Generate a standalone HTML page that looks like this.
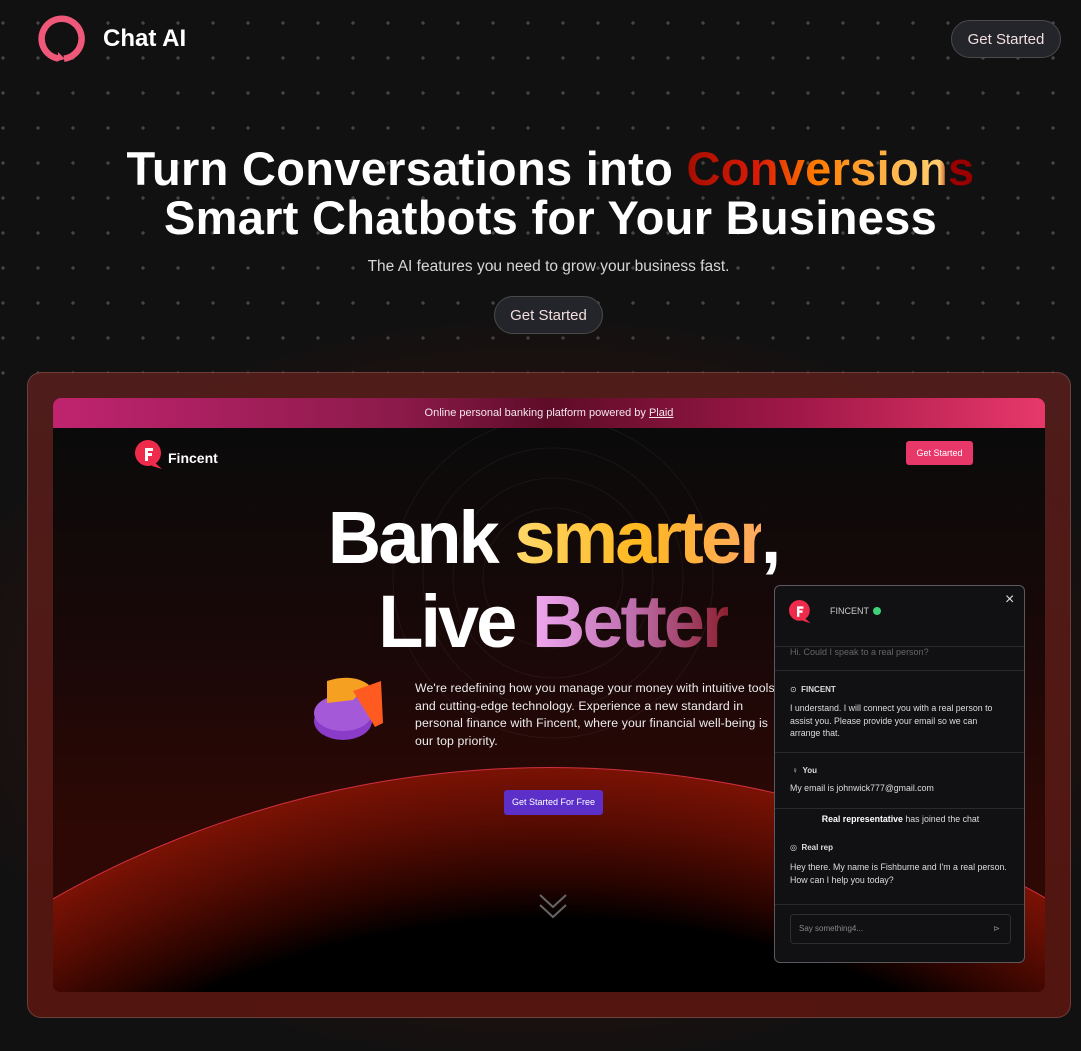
<!DOCTYPE html>
<html><head><meta charset="utf-8"><style>
*{margin:0;padding:0;box-sizing:border-box}
html,body{width:1081px;height:1051px;overflow:hidden}
body{background:#111111;font-family:"Liberation Sans",sans-serif;color:#fff;position:relative}
.abs{position:absolute}
.dots{left:0;top:0;width:1081px;height:380px}
.glow{left:0;top:300px;width:1081px;height:751px;background:radial-gradient(ellipse 620px 380px at 50% 52%,rgba(110,25,15,.75),rgba(60,15,10,.4) 70%,rgba(17,17,17,0) 100%)}
.btn{border:1px solid #4a4a4a;background:#24252a;border-radius:20px;color:#f2dede;font-size:15px;display:flex;align-items:center;justify-content:center}
h1{position:absolute;left:10px;width:1081px;text-align:center;font-size:47px;font-weight:bold;line-height:48px;letter-spacing:0.3px}
.grad{background:linear-gradient(90deg,#a50e00 0%,#d91a07 25%,#ff7a00 45%,#ffb347 70%,#ffcf70 88%,#9a0000 92%,#9a0000 100%);-webkit-background-clip:text;background-clip:text;color:transparent}
.frame{left:27px;top:372px;width:1044px;height:646px;border-radius:14px;border:1px solid rgba(255,255,255,.17);background:linear-gradient(180deg,rgba(85,30,28,.9),rgba(90,22,15,.9));}
.inner{left:53px;top:398px;width:992px;height:594px;border-radius:8px;overflow:hidden;background:#0a0a0a}
.banner{left:0;top:0;width:992px;height:30px;background:linear-gradient(90deg,#c0246f,#8c1a4a 35%,#5e0c28 50%,#a01848 75%,#e8386a);font-size:11px;color:#f5e6ee;text-align:center;line-height:30px}
.chat{left:774px;top:585px;width:251px;height:378px;background:#111113;border:1px solid #5a5a5e;border-radius:6px;overflow:hidden;font-size:8.5px;color:#ddd}
.sep{position:absolute;left:0;width:251px;height:1px;background:#2a2a2d}
</style></head><body>
<svg class="abs dots" width="1081" height="380"><defs><pattern id="p" x="21" y="76" width="35" height="35" patternUnits="userSpaceOnUse"><path d="M17 15v4M15 17h4" stroke="#555" stroke-width="1"/></pattern></defs><rect width="1081" height="380" fill="url(#p)"/></svg>
<div class="abs glow"></div>
<svg class="abs" style="left:38px;top:15px" width="48" height="48" viewBox="0 0 48 48"><path d="M20.5 43.5 A20 20 0 1 1 26 43.6" fill="none" stroke="#f0587a" stroke-width="6.5"/><path d="M20 37 L20 46 L27 44Z" fill="#f0587a"/></svg>
<div class="abs" style="left:103px;top:25px;font-size:24px;font-weight:bold">Chat AI</div>
<div class="abs btn" style="left:951px;top:20px;width:110px;height:38px">Get Started</div>
<h1 style="top:145px">Turn Conversations into <span class="grad">Conversions</span></h1>
<h1 style="top:194px">Smart Chatbots for Your Business</h1>
<div class="abs" style="left:0;width:1097px;top:258px;text-align:center;font-size:15.5px;color:#d6d6d6">The AI features you need to grow your business fast.</div>
<div class="abs btn" style="left:494px;top:296px;width:109px;height:38px">Get Started</div>
<div class="abs frame"></div>
<div class="abs inner">
 <div class="abs" style="left:0;top:30px;width:992px;height:564px;background:linear-gradient(180deg,#0a0a0a 0%,#1a0808 40%,#2d0804 70%,#2d0804 100%)"></div>
 <svg class="abs" style="left:0;top:30px" width="992" height="564"><g fill="none" stroke="rgba(255,255,255,.05)"><circle cx="500" cy="150" r="70"/><circle cx="500" cy="150" r="100"/><circle cx="500" cy="150" r="130"/><circle cx="500" cy="150" r="160"/></g></svg>
 <div class="abs" style="left:-509px;top:369px;width:2012px;height:2012px;border-radius:50%;border:1px solid #d03040;background:radial-gradient(circle closest-side,#000 0,#000 85%,#2a0400 89%,#5a0c02 95%,#7a1205 100%)"></div>
 <div class="abs banner">Online personal banking platform powered by <u>Plaid</u></div>
 <svg class="abs" style="left:81px;top:42px" width="32" height="30" viewBox="0 0 32 30"><circle cx="14" cy="13" r="13" fill="#ee2b4b"/><path d="M20 22 L28 29 L18 26Z" fill="#ee2b4b"/><path d="M11 21V8h8v3h-5v2h4v3h-4v5z" fill="#fff"/></svg>
 <div class="abs" style="left:115px;top:52px;font-size:14px;font-weight:bold">Fincent</div>
 <div class="abs" style="left:853px;top:43px;width:67px;height:24px;background:#e8386a;border-radius:3px;font-size:9px;text-align:center;line-height:24px">Get Started</div>
 <div class="abs" style="left:0;width:1000px;top:100px;text-align:center;font-size:74px;font-weight:bold;letter-spacing:-3px;line-height:80px">Bank <span style="background:linear-gradient(90deg,#ffd86a,#ffb820 50%,#ffa860);-webkit-background-clip:text;background-clip:text;color:transparent">smarter</span>,</div>
 <div class="abs" style="left:0;width:1000px;top:184px;text-align:center;font-size:74px;font-weight:bold;letter-spacing:-3px;line-height:80px">Live <span style="background:linear-gradient(90deg,#f0a8f0,#c070b0 50%,#8c2030);-webkit-background-clip:text;background-clip:text;color:transparent">Better</span></div>
 <svg class="abs" style="left:260px;top:275px" width="85" height="72" viewBox="0 0 85 72"><ellipse cx="30" cy="48" rx="29" ry="19" fill="#8a3cc8"/><ellipse cx="30" cy="40" rx="29" ry="18" fill="#a45ad8"/><path d="M14 30 L14 8 Q40 0 56 12 L40 27Z" fill="#f5a020"/><path d="M40 18 L68 8 L70 50 L62 54 L56 44 Z" fill="#ff5a20"/></svg>
 <div class="abs" style="left:362px;top:282px;width:370px;font-size:12.3px;line-height:17.5px;color:#eee;letter-spacing:0.1px">We're redefining how you manage your money with intuitive tools and cutting-edge technology. Experience a new standard in personal finance with Fincent, where your financial well-being is our top priority.</div>
 <div class="abs" style="left:451px;top:392px;width:99px;height:25px;background:#5b2fc8;border-radius:3px;font-size:9px;text-align:center;line-height:25px">Get Started For Free</div>
 <svg class="abs" style="left:485px;top:495px" width="30" height="28" viewBox="0 0 30 28"><path d="M2 2l13 12 13-12M2 12l13 12 13-12" fill="none" stroke="#666" stroke-width="2"/></svg>
</div>
<div class="abs chat">
 <svg class="abs" style="left:13px;top:14px" width="26" height="24" viewBox="0 0 32 30"><circle cx="14" cy="13" r="13" fill="#ee2b4b"/><path d="M20 22 L28 29 L18 26Z" fill="#ee2b4b"/><path d="M11 21V8h8v3h-5v2h4v3h-4v5z" fill="#fff"/></svg>
 <div class="abs" style="left:55px;top:20px;font-size:9px;color:#ccc">FINCENT <span style="display:inline-block;width:8px;height:8px;border-radius:50%;background:#3ed17a;vertical-align:-1px;margin-left:2px"></span></div>
 <div class="abs" style="left:230px;top:5px;font-size:16px;color:#ddd">×</div>
 <div class="sep" style="top:60px"></div>
 <div class="abs" style="left:15px;top:61px;color:#666;font-size:9px">Hi. Could I speak to a real person?</div>
 <div class="sep" style="top:84px"></div>
 <div class="abs" style="left:15px;top:99px;font-size:8px">⊙ &nbsp;<b>FINCENT</b></div>
 <div class="abs" style="left:15px;top:116px;width:210px;line-height:12.5px;font-size:8.8px">I understand. I will connect you with a real person to assist you. Please provide your email so we can arrange that.</div>
 <div class="sep" style="top:166px"></div>
 <div class="abs" style="left:17px;top:180px;font-size:8px">♀ &nbsp;<b>You</b></div>
 <div class="abs" style="left:15px;top:197px;font-size:8.8px">My email is johnwick777@gmail.com</div>
 <div class="sep" style="top:222px"></div>
 <div class="abs" style="left:0;width:251px;top:228px;text-align:center;font-size:8.8px"><b style="color:#fff">Real representative</b> has joined the chat</div>
 <div class="abs" style="left:15px;top:257px;font-size:8px">◎ &nbsp;<b>Real rep</b></div>
 <div class="abs" style="left:15px;top:275px;width:225px;line-height:12.5px;font-size:8.8px">Hey there. My name is Fishburne and I'm a real person. How can I help you today?</div>
 <div class="sep" style="top:318px"></div>
 <div class="abs" style="left:15px;top:328px;width:221px;height:30px;border:1px solid #2e2e32;border-radius:4px;color:#888;font-size:8px;line-height:28px;padding-left:8px">Say something4...<span style="float:right;margin-right:10px">⊳</span></div>
</div>
</body></html>
